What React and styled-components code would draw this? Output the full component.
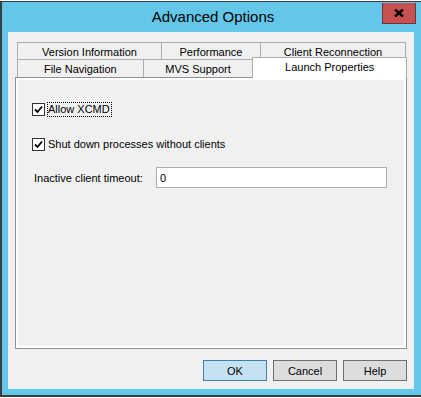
import React from 'react';
import styled, { createGlobalStyle } from 'styled-components';

const GlobalStyle = createGlobalStyle`
  html, body {
    margin: 0;
    padding: 0;
    background: #ffffff;
    overflow: hidden;
  }
  body {
    font-family: "Liberation Sans", Arial, sans-serif;
    font-size: 11px;
    color: #000;
  }
`;

const Window = styled.div`
  margin-top: 1px;
  width: 424px;
  box-sizing: border-box;
  background: #63c7e9;
  border-top: 1px solid #3c3c3c;
  border-left: 2px solid #3c3c3c;
  border-bottom: 2px solid #3c3c3c;
  padding: 0 10px 6px 6px;
`;

const TitleBar = styled.div`
  height: 30px;
  display: grid;
  grid-template-columns: 1fr auto 1fr;
  align-items: center;
`;

const Title = styled.div`
  grid-column: 2;
  font-size: 15px;
  color: #000;
  margin-left: 4px;
  margin-top: -1px;
`;

const CloseButton = styled.div`
  grid-column: 3;
  justify-self: end;
  align-self: start;
  margin-top: 1px;
  margin-right: -2px;
  width: 34px;
  height: 21px;
  box-sizing: border-box;
  background: #c75050;
  border: 1px solid #6f3434;
  border-top: none;
  display: flex;
  align-items: center;
  justify-content: center;
`;

const Client = styled.div`
  height: 357px;
  box-sizing: border-box;
  background: #f0f0f0;
  padding: 11px 7px 8px 7px;
  display: flex;
  flex-direction: column;
`;

const TabRow = styled.div`
  display: flex;
  align-items: flex-end;
  height: ${p => p.$h}px;
  padding-left: 2px;
`;

const Tab = styled.div`
  width: ${p => p.$w}px;
  height: ${p => p.$h}px;
  box-sizing: border-box;
  margin-left: -1px;
  &:first-child { margin-left: 0; }
  border: 1px solid #acacac;
  border-bottom: none;
  background: ${p => (p.$active ? '#ffffff' : '#f0f0f0')};
  display: flex;
  justify-content: center;
  padding-top: 1px;
  line-height: 16px;
  white-space: nowrap;
  position: relative;
  z-index: ${p => (p.$active ? 2 : 0)};
  margin-bottom: ${p => (p.$active ? -1 : 0)}px;
`;

const Panel = styled.div`
  height: 272px;
  box-sizing: border-box;
  border: 1px solid #8e8f94;
  box-shadow: inset 0 0 0 2px #ffffff;
  padding: 24px 16px 0 16px;
  display: flex;
  flex-direction: column;
`;

const CheckRow = styled.div`
  display: flex;
  align-items: center;
  height: 15px;
  margin-top: ${p => p.$mt || 0}px;
`;

const Box = styled.div`
  width: 13px;
  height: 13px;
  box-sizing: border-box;
  border: 1px solid #333333;
  background: #ffffff;
  display: flex;
  align-items: center;
  justify-content: center;
  margin-right: 2px;
`;

const CheckLabel = styled.span`
  line-height: 13px;
  border: 1px dotted ${p => (p.$focus ? '#000' : 'transparent')};
  padding-right: 1px;
`;

const FieldRow = styled.div`
  display: flex;
  align-items: center;
  height: 21px;
  margin-top: ${p => p.$mt || 0}px;
  padding-left: 2px;
`;

const FieldLabel = styled.span`
  width: 122px;
`;

const TextInput = styled.div`
  width: 231px;
  height: 21px;
  box-sizing: border-box;
  border: 1px solid #abadb3;
  background: #ffffff;
  padding-left: 3px;
  display: flex;
  align-items: center;
`;

const ButtonRow = styled.div`
  display: flex;
  justify-content: flex-end;
  gap: 6px;
  margin-top: 11px;
`;

const Button = styled.div`
  width: 64px;
  height: 21px;
  box-sizing: border-box;
  border: 1px solid ${p => (p.$default ? '#3c7fb1' : '#707070')};
  background: ${p => (p.$default ? '#c6e2f2' : '#dddddd')};
  display: flex;
  align-items: center;
  justify-content: center;
`;

const CheckMark = () => (
  <svg width="9" height="9" viewBox="0 0 9 9">
    <path d="M1 4.5 L3.5 7 L8 1.5" fill="none" stroke="#000" strokeWidth="1.8" />
  </svg>
);

const CloseGlyph = () => (
  <svg width="10" height="8" viewBox="0 0 10 8">
    <path d="M1 0.5 L9 7.5 M9 0.5 L1 7.5" stroke="#000" strokeWidth="2.4" />
  </svg>
);

const topTabs = [
  { label: 'Version Information', w: 145 },
  { label: 'Performance', w: 100 },
  { label: 'Client Reconnection', w: 146 },
];

const bottomTabs = [
  { label: 'File Navigation', w: 127 },
  { label: 'MVS Support', w: 111 },
  { label: 'Launch Properties', w: 155, active: true },
];

const App = () => (
  <>
    <GlobalStyle />
    <Window>
      <TitleBar>
        <Title>Advanced Options</Title>
        <CloseButton>
          <CloseGlyph />
        </CloseButton>
      </TitleBar>
      <Client>
        <TabRow $h={16}>
          {topTabs.map(t => (
            <Tab key={t.label} $w={t.w} $h={17}>
              {t.label}
            </Tab>
          ))}
        </TabRow>
        <TabRow $h={18}>
          {bottomTabs.map(t => (
            <Tab key={t.label} $w={t.w} $h={t.active ? 21 : 18} $active={t.active}>
              {t.label}
            </Tab>
          ))}
        </TabRow>
        <Panel>
          <CheckRow>
            <Box>
              <CheckMark />
            </Box>
            <CheckLabel $focus>Allow XCMD</CheckLabel>
          </CheckRow>
          <CheckRow $mt={20}>
            <Box>
              <CheckMark />
            </Box>
            <CheckLabel>Shut down processes without clients</CheckLabel>
          </CheckRow>
          <FieldRow $mt={15}>
            <FieldLabel>Inactive client timeout:</FieldLabel>
            <TextInput>0</TextInput>
          </FieldRow>
        </Panel>
        <ButtonRow>
          <Button $default>OK</Button>
          <Button>Cancel</Button>
          <Button>Help</Button>
        </ButtonRow>
      </Client>
    </Window>
  </>
);

export default App;
